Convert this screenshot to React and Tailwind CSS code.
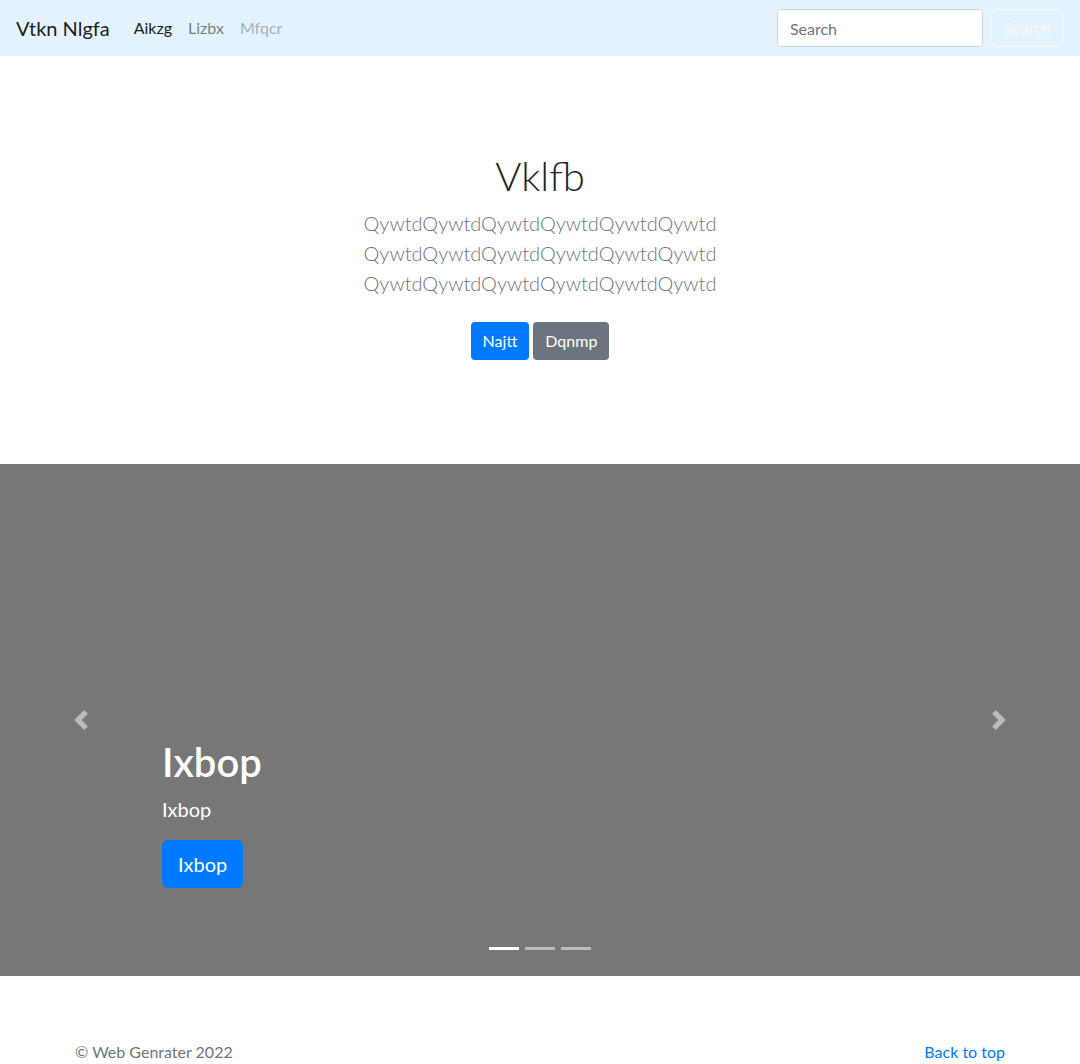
import { useState } from 'react';

const font = { fontFamily: 'Lato, "Open Sans", "Liberation Sans", sans-serif' };

function Chevron({ dir }) {
  return (
    <svg width="20" height="20" viewBox="0 0 8 8" fill="#fff">
      {dir === 'left'
        ? <path d="M5.25 0l-4 4 4 4 1.5-1.5L4.25 4l2.5-2.5L5.25 0z" />
        : <path d="M2.75 0l-1.5 1.5L3.75 4l-2.5 2.5L2.75 8l4-4-4-4z" />}
    </svg>
  );
}

export default function App() {
  const [active] = useState(0);
  const line = 'QywtdQywtdQywtdQywtdQywtdQywtd';

  return (
    <div className="min-h-[1064px] bg-white text-[#212529]" style={font}>
      <nav className="h-14 bg-[#e3f2fd] flex items-center justify-between px-4">
        <div className="flex items-center">
          <a className="text-xl text-black/90 mr-4 leading-[30px]">Vtkn Nlgfa</a>
          <a className="px-2 text-base text-black/90">Aikzg</a>
          <a className="px-2 text-base text-black/50">Lizbx</a>
          <a className="px-2 text-base text-black/30">Mfqcr</a>
        </div>
        <div className="flex items-center">
          <input
            placeholder="Search"
            className="w-[206px] h-[38px] px-3 mr-2 bg-white border border-[#ced4da] rounded text-base placeholder:text-[#6c757d] outline-none"
          />
          <button className="h-[38px] px-3 border border-[#f8f9fa] rounded text-base text-[#f8f9fa]">Search</button>
        </div>
      </nav>

      <section className="py-24 text-center">
        <h1 className="text-[40px] leading-[48px] font-light mb-2">Vklfb</h1>
        <p className="mx-auto max-w-[450px] text-xl leading-[30px] font-light text-[#6c757d]">
          {line} {line} {line}
        </p>
        <div className="mt-6 mb-2 flex justify-center gap-1">
          <a className="h-[38px] px-3 flex items-center rounded bg-[#007bff] text-white text-base">Najtt</a>
          <a className="h-[38px] px-3 flex items-center rounded bg-[#6c757d] text-white text-base">Dqnmp</a>
        </div>
      </section>

      <div className="relative h-[512px] bg-[#777] flex">
        <button className="w-[15%] flex items-center justify-center opacity-50">
          <Chevron dir="left" />
        </button>
        <div className="flex-1 flex flex-col justify-end pb-[72px] text-white">
          <h1 className="text-[40px] leading-[48px] font-semibold mb-2">Ixbop</h1>
          <p className="text-xl leading-[30px] mb-4">Ixbop</p>
          <div className="mb-4">
            <a className="inline-flex items-center h-12 px-4 rounded-md bg-[#007bff] text-white text-xl">Ixbop</a>
          </div>
        </div>
        <button className="w-[15%] flex items-center justify-center opacity-50">
          <Chevron dir="right" />
        </button>
        <ol className="absolute left-0 right-0 bottom-[26px] flex justify-center">
          {[0, 1, 2].map(i => (
            <li key={i} className={`w-[30px] h-[3px] mx-[3px] bg-white ${i === active ? 'opacity-100' : 'opacity-50'}`} />
          ))}
        </ol>
      </div>

      <footer className="pt-16 pb-12">
        <div className="mx-auto w-[960px] px-[15px] flex justify-between text-base leading-6">
          <p className="text-[#6c757d]">© Web Genrater 2022</p>
          <a className="text-[#007bff]">Back to top</a>
        </div>
      </footer>
    </div>
  );
}
